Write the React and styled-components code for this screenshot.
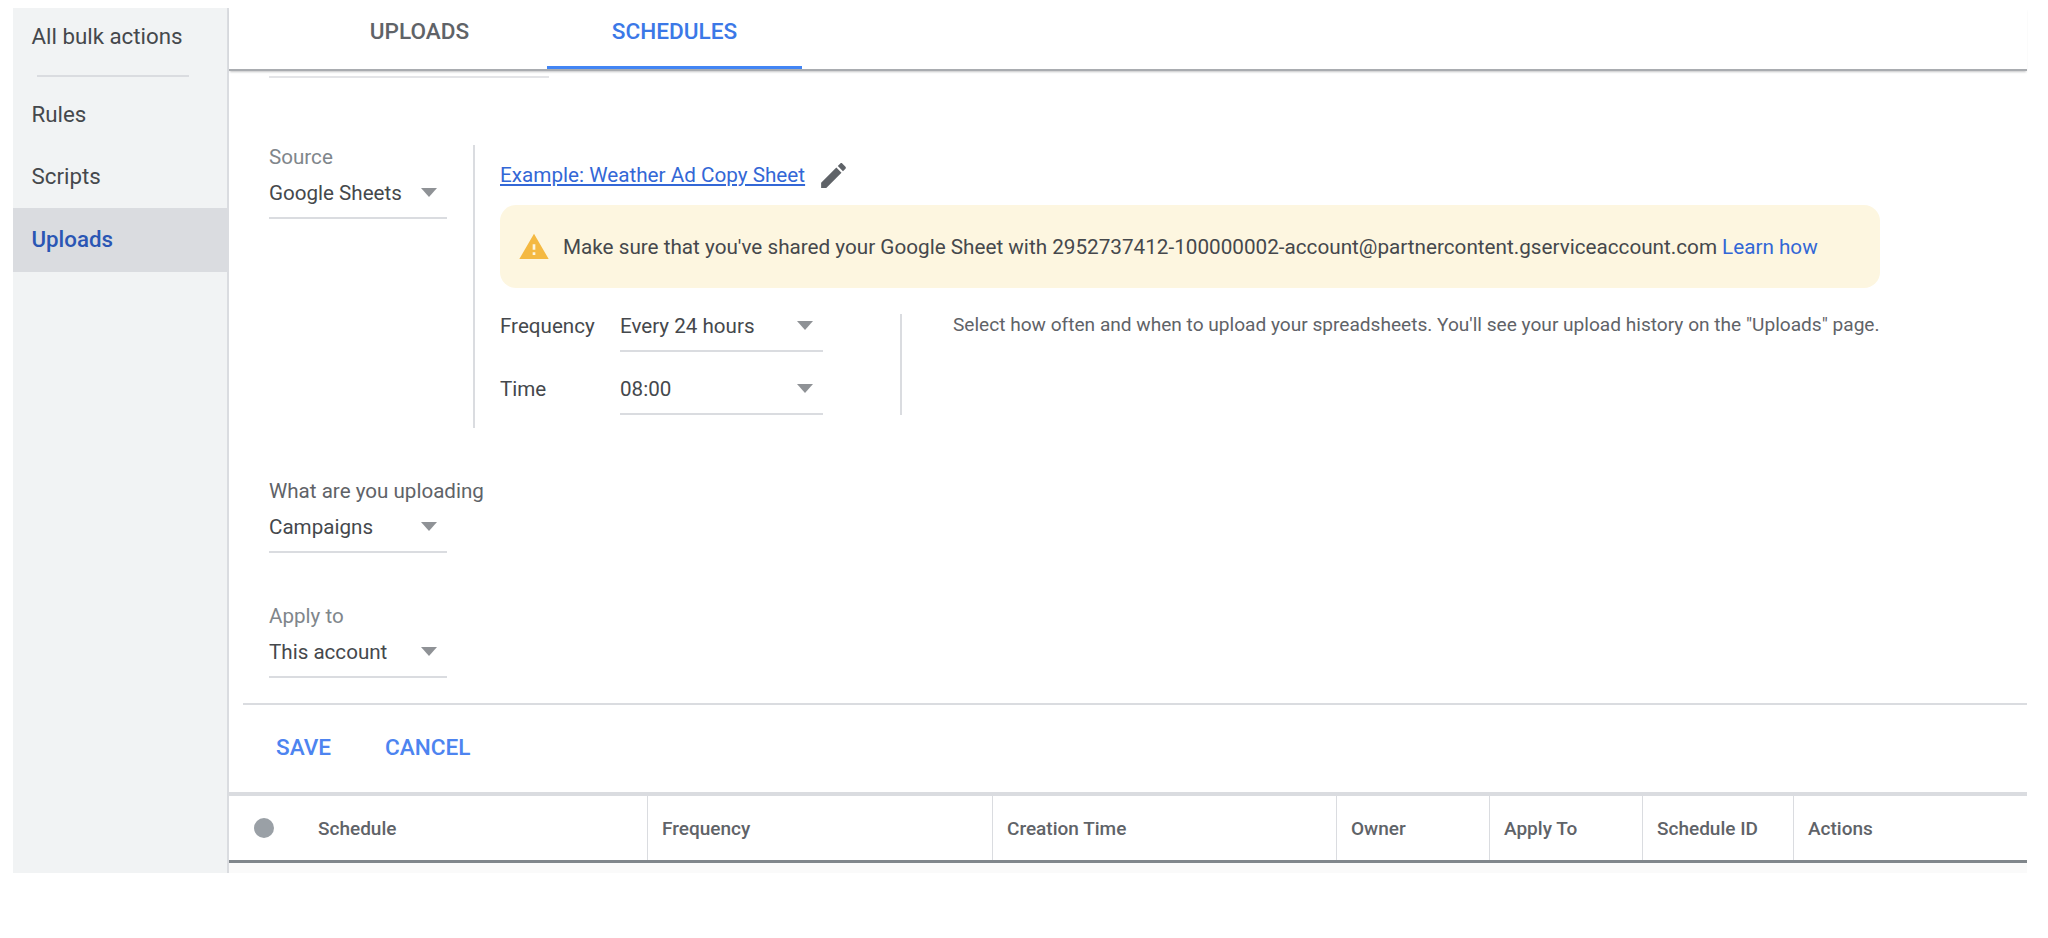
import React from 'react'
import styled, { createGlobalStyle } from 'styled-components'

const GlobalStyle = createGlobalStyle`
  html, body {
    margin: 0;
    padding: 0;
    background: #fff;
    overflow: hidden;
  }
  body {
    font-family: Roboto, "Liberation Sans", sans-serif;
    color: #45484c;
  }
`

const Page = styled.div`
  display: flex;
  align-items: stretch;
  width: 2048px;
  height: 873px;
  box-sizing: border-box;
  padding: 8px 21px 0 13px;
`

const Sidebar = styled.nav`
  flex: 0 0 216px;
  box-sizing: border-box;
  background: #f1f3f4;
  border-right: 2px solid #dadce0;
`

const SideItem = styled.a`
  display: flex;
  align-items: center;
  box-sizing: border-box;
  height: ${p => (p.$active ? '64px' : '62px')};
  margin-top: ${p => (p.$active ? '1px' : '0')};
  padding: 0 0 ${p => (p.$active ? '3px' : '0')} 18.5px;
  font-size: 22.3px;
  color: ${p => (p.$active ? '#2a56b4' : '#45484c')};
  font-weight: ${p => (p.$active ? 500 : 400)};
  background: ${p => (p.$active ? '#dadce0' : 'transparent')};
`

const TopItem = styled(SideItem)`
  height: 56px;
`

const SideRule = styled.div`
  height: 2px;
  margin: 11px 38px 6px 24px;
  background: #dadce0;
`

const Main = styled.main`
  flex: 1;
  display: flex;
  flex-direction: column;
  min-width: 0;
`

const TabBar = styled.div`
  display: flex;
  height: 61px;
  padding-left: 63px;
  border-bottom: 2px solid #a9acb0;
  box-shadow: 0 2px 2px -1px rgba(60, 64, 67, 0.3);
`

const Tab = styled.div`
  width: 255px;
  height: 61px;
  box-sizing: border-box;
  padding-top: 11px;
  line-height: 26px;
  text-align: center;
  font-size: 22.6px;
  font-weight: 500;
  color: ${p => (p.$active ? '#3b78e7' : '#5f6368')};
  border-bottom: 3px solid ${p => (p.$active ? '#4285f4' : 'transparent')};
`

const Form = styled.div`
  flex: 1;
  padding-left: 40px;
`

const StubLine = styled.div`
  width: 280px;
  height: 2px;
  margin: 5px 0 67px;
  background: #e3e4e7;
`

const SourceRow = styled.div`
  display: flex;
  min-height: 283px;
`

const SourceCol = styled.div`
  flex: 0 0 204px;
`

const Panel = styled.div`
  flex: 1;
  padding: 18px 147px 0 25px;
  border-left: 2px solid #dadce0;
`

const Field = styled.div`
  width: 178px;
  margin-top: ${p => p.$top || 0}px;
`

const FieldLabel = styled.div`
  font-size: 20.6px;
  line-height: 24px;
  margin-bottom: 12px;
  white-space: nowrap;
  color: ${p => (p.$dark ? '#5f6368' : '#80868b')};
`

const Select = styled.div`
  display: flex;
  align-items: center;
  justify-content: space-between;
  box-sizing: border-box;
  height: 38px;
  padding: 0 10px 12px 0;
  border-bottom: 2px solid #dadce0;
  font-size: 20.6px;
  line-height: 24px;
  color: #45484c;
  white-space: nowrap;
`

const Caret = styled.span`
  width: 0;
  height: 0;
  margin-bottom: 2px;
  border-left: 8px solid transparent;
  border-right: 8px solid transparent;
  border-top: 9px solid #8f9296;
`

const LinkRow = styled.div`
  display: flex;
  align-items: center;
  gap: 12px;
  height: 24px;
`

const SheetLink = styled.a`
  font-size: 20.7px;
  line-height: 24px;
  color: #3367d6;
  text-decoration: underline;
`

const PencilIcon = styled.svg`
  width: 33px;
  height: 33px;
  fill: #5f6368;
`

const Banner = styled.div`
  display: flex;
  align-items: center;
  height: 83px;
  margin-top: 18px;
  padding-left: 18px;
  border-radius: 16px;
  background: #fdf6e0;
  font-size: 20.7px;
  color: #45484c;
  white-space: nowrap;
`

const WarnIcon = styled.svg`
  width: 32px;
  height: 32px;
  margin-right: 13px;
  fill: #f4b942;
`

const InlineLink = styled.a`
  margin-left: 5px;
  color: #3367d6;
`

const Schedule = styled.div`
  display: flex;
  margin-top: 26px;
`

const ScheduleGrid = styled.div`
  display: grid;
  grid-template-columns: 120px 203px;
  row-gap: 25px;
  align-items: start;
`

const RowLabel = styled.div`
  font-size: 20.6px;
  line-height: 24px;
  color: #45484c;
`

const HelpText = styled.div`
  margin-left: 77px;
  padding-left: 51px;
  height: 101px;
  border-left: 2px solid #dadce0;
  font-size: 19.1px;
  line-height: 22px;
  color: #5f6368;
  white-space: nowrap;
`

const FormRule = styled.div`
  height: 2px;
  margin: 25px 0 0 -26px;
  background: #dadce0;
`

const Actions = styled.div`
  display: flex;
  align-items: center;
  gap: 54px;
  box-sizing: border-box;
  height: 87px;
  margin-left: -32px;
  padding: 0 0 2px 39px;
`

const TextButton = styled.button`
  padding: 0;
  border: 0;
  background: none;
  font-family: inherit;
  font-size: 22.6px;
  font-weight: 500;
  color: #4d84f0;
`

const TableHead = styled.div`
  display: grid;
  grid-template-columns: 419px 345px 344px 153px 153px 151px 1fr;
  height: 64px;
  border-top: 4px solid #dadce0;
  border-bottom: 3px solid #80868b;
`

const HeadCell = styled.div`
  display: flex;
  align-items: center;
  box-sizing: border-box;
  padding-left: ${p => (p.$first ? '25px' : '14px')};
  border-right: ${p => (p.$last ? '0' : '1px solid #dadce0')};
  font-size: 19px;
  font-weight: 500;
  color: #5f6368;
  white-space: nowrap;
`

const SelectDot = styled.span`
  width: 20px;
  height: 20px;
  margin-right: 44px;
  border-radius: 50%;
  background: #9aa0a6;
`

const TableFoot = styled.div`
  height: 10px;
  background: #fafafa;
`

const columns = ['Frequency', 'Creation Time', 'Owner', 'Apply To', 'Schedule ID', 'Actions']

export default function App() {
  return (
    <Page>
      <GlobalStyle />
      <Sidebar>
        <TopItem>All bulk actions</TopItem>
        <SideRule />
        <SideItem>Rules</SideItem>
        <SideItem>Scripts</SideItem>
        <SideItem $active>Uploads</SideItem>
      </Sidebar>
      <Main>
        <TabBar>
          <Tab>UPLOADS</Tab>
          <Tab $active>SCHEDULES</Tab>
        </TabBar>
        <Form>
          <StubLine />
          <SourceRow>
            <SourceCol>
              <Field>
                <FieldLabel>Source</FieldLabel>
                <Select>Google Sheets<Caret /></Select>
              </Field>
            </SourceCol>
            <Panel>
              <LinkRow>
                <SheetLink>Example: Weather Ad Copy Sheet</SheetLink>
                <PencilIcon viewBox="0 0 24 24">
                  <path d="M3 17.25V21h3.75L17.81 9.94l-3.75-3.75L3 17.25zM20.71 7.04c.39-.39.39-1.02 0-1.41l-2.34-2.34c-.39-.39-1.02-.39-1.41 0l-1.83 1.83 3.75 3.75 1.83-1.83z" />
                </PencilIcon>
              </LinkRow>
              <Banner>
                <WarnIcon viewBox="0 0 24 24">
                  <path d="M1 21h22L12 2 1 21zm12-3h-2v-2h2v2zm0-4h-2v-4h2v4z" />
                </WarnIcon>
                Make sure that you've shared your Google Sheet with 2952737412-100000002-account@partnercontent.gserviceaccount.com
                <InlineLink>Learn how</InlineLink>
              </Banner>
              <Schedule>
                <ScheduleGrid>
                  <RowLabel>Frequency</RowLabel>
                  <Select>Every 24 hours<Caret /></Select>
                  <RowLabel>Time</RowLabel>
                  <Select>08:00<Caret /></Select>
                </ScheduleGrid>
                <HelpText>Select how often and when to upload your spreadsheets. You'll see your upload history on the "Uploads" page.</HelpText>
              </Schedule>
            </Panel>
          </SourceRow>
          <Field $top={51}>
            <FieldLabel $dark>What are you uploading</FieldLabel>
            <Select>Campaigns<Caret /></Select>
          </Field>
          <Field $top={51}>
            <FieldLabel>Apply to</FieldLabel>
            <Select>This account<Caret /></Select>
          </Field>
          <FormRule />
          <Actions>
            <TextButton>SAVE</TextButton>
            <TextButton>CANCEL</TextButton>
          </Actions>
        </Form>
        <TableHead>
          <HeadCell $first><SelectDot />Schedule</HeadCell>
          {columns.map((c, i) => (
            <HeadCell key={c} $last={i === columns.length - 1}>{c}</HeadCell>
          ))}
        </TableHead>
        <TableFoot />
      </Main>
    </Page>
  )
}
